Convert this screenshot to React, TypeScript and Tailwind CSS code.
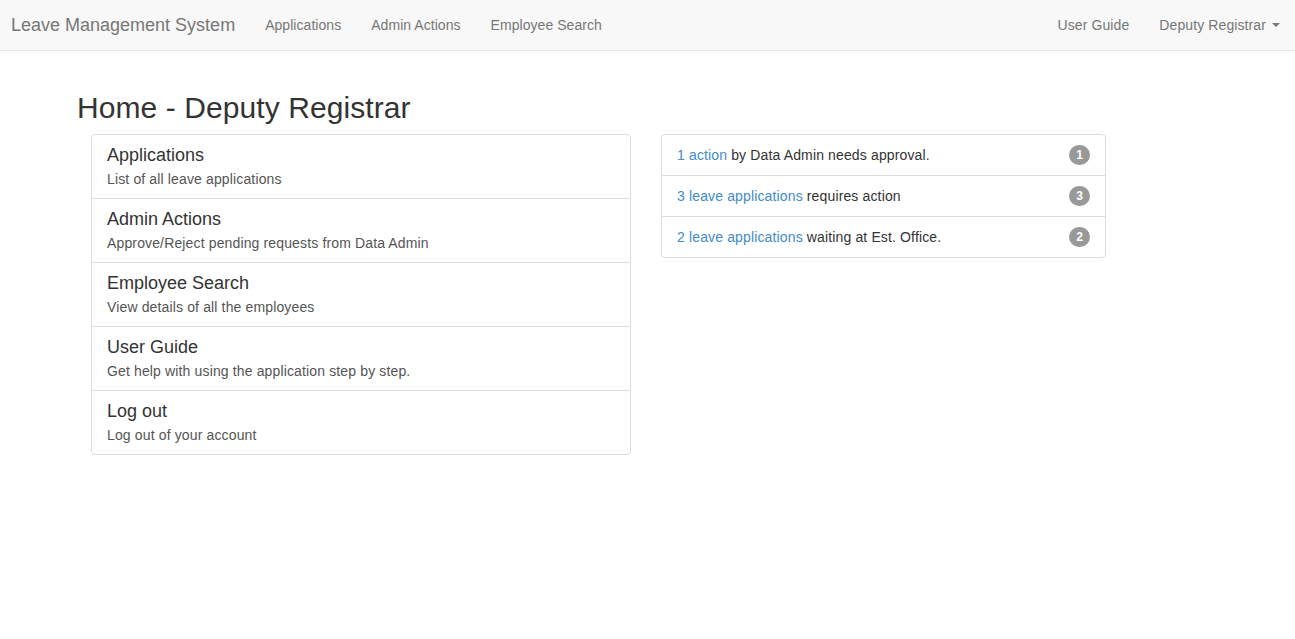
import React from "react";

const leftItems = [
  { title: "Applications", desc: "List of all leave applications" },
  { title: "Admin Actions", desc: "Approve/Reject pending requests from Data Admin" },
  { title: "Employee Search", desc: "View details of all the employees" },
  { title: "User Guide", desc: "Get help with using the application step by step." },
  { title: "Log out", desc: "Log out of your account" },
];

const rightItems = [
  { link: "1 action", rest: " by Data Admin needs approval.", n: 1 },
  { link: "3 leave applications", rest: " requires action", n: 3 },
  { link: "2 leave applications", rest: " waiting at Est. Office.", n: 2 },
];

export default function App() {
  return (
    <div className="min-h-[639px] bg-white text-[14px] text-[#333]" style={{ fontFamily: '"Liberation Sans", Arial, Helvetica, sans-serif' }}>
      <nav className="h-[51px] bg-[#f8f8f8] border-b border-[#e7e7e7] flex items-center justify-between pl-[11px] pr-[15px]">
        <div className="flex items-center">
          <span className="text-[18px] text-[#777] pr-[15px]">Leave Management System</span>
          <div className="flex items-center tracking-[0.05px]">
            <span className="px-[15px] text-[#777]">Applications</span>
            <span className="px-[15px] text-[#777]">Admin Actions</span>
            <span className="px-[15px] text-[#777]">Employee Search</span>
          </div>
        </div>
        <div className="flex items-center tracking-[0.1px]">
          <span className="px-[15px] text-[#777]">User Guide</span>
          <span className="pl-[15px] text-[#777] flex items-center">
            Deputy Registrar
            <span className="ml-[6px] inline-block w-0 h-0 border-l-[4px] border-r-[4px] border-t-[4px] border-l-transparent border-r-transparent border-t-[#777]" />
          </span>
        </div>
      </nav>

      <div className="pl-[77px] pt-[40px]">
        <h1 className="text-[30px] leading-[33px] text-[#333] font-normal mb-[10px] tracking-[0.08px]">Home - Deputy Registrar</h1>
        <div className="flex items-start pl-[14px] gap-[30px]">
          <div className="w-[540px] flex flex-col">
            {leftItems.map((it, i) => (
              <div
                key={it.title}
                className={`border border-[#ddd] px-[15px] pt-[10px] pb-[9px] ${i > 0 ? "-mt-px" : ""} ${i === 0 ? "rounded-t-[4px]" : ""} ${i === leftItems.length - 1 ? "rounded-b-[4px]" : ""}`}
              >
                <div className="text-[18px] leading-[20px] text-[#333] mb-[4px]">{it.title}</div>
                <div className="text-[14px] leading-[20px] text-[#555] tracking-[0.14px]">{it.desc}</div>
              </div>
            ))}
          </div>
          <div className="w-[445px] flex flex-col">
            {rightItems.map((it, i) => (
              <div
                key={i}
                className={`border border-[#ddd] px-[15px] py-[10px] leading-[20px] flex items-center justify-between ${i > 0 ? "-mt-px" : ""} ${i === 0 ? "rounded-t-[4px]" : ""} ${i === rightItems.length - 1 ? "rounded-b-[4px]" : ""}`}
              >
                <span className="tracking-[0.14px]">
                  <span className="text-[#428bca]">{it.link}</span>
                  <span className="text-[#333]">{it.rest}</span>
                </span>
                <span className="bg-[#999] text-white text-[12px] font-bold leading-none px-[7px] py-[4px] rounded-[10px] min-w-[21px] text-center">{it.n}</span>
              </div>
            ))}
          </div>
        </div>
      </div>
    </div>
  );
}
